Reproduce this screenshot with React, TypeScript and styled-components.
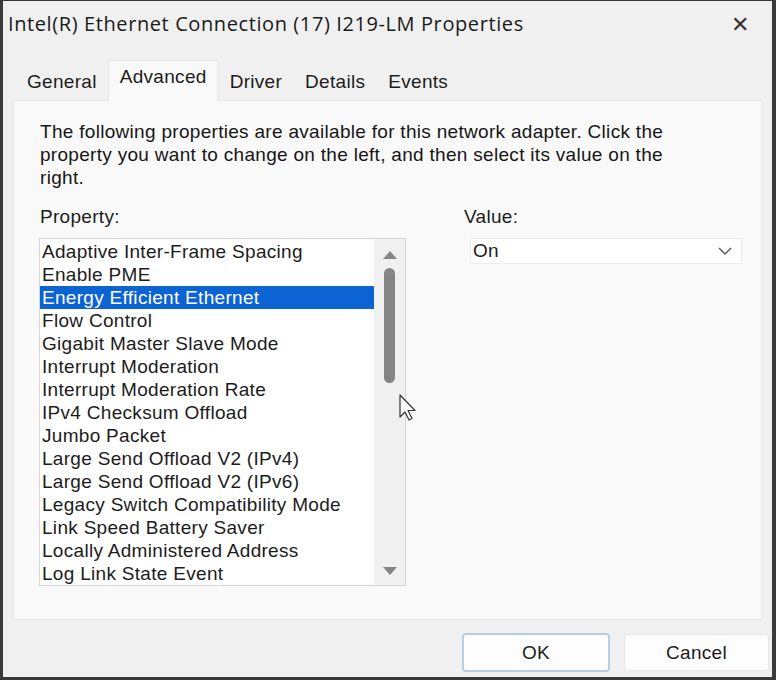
import styled, { createGlobalStyle } from 'styled-components';

const GlobalStyle = createGlobalStyle`
    html, body {
        margin: 0;
        padding: 0;
        background: #3a3a3a;
    }
    * {
        box-sizing: border-box;
    }
`;

const Window = styled.div`
    position: relative;
    width: 776px;
    height: 680px;
    display: flex;
    flex-direction: column;
    background: #f0f0f0;
    border-style: solid;
    border-color: #3a3a3a;
    border-width: 1px 4px 3px 3px;
    font-family: 'Liberation Sans', Arial, sans-serif;
    font-size: 19px;
    letter-spacing: 0.3px;
    color: #1c1c1c;
`;

const TitleBar = styled.div`
    height: 44px;
    display: flex;
    align-items: center;
    justify-content: space-between;
    padding: 0 22px 0 5px;
    font-family: 'Open Sans', sans-serif;
    font-size: 20px;
    letter-spacing: 0.6px;
    color: #1a1a1a;
`;

const Close = styled.span`
    font-size: 22px;
    font-weight: 300;
    color: #333;
`;

const Tabs = styled.div`
    display: flex;
    align-items: flex-end;
    height: 55px;
    padding-left: 12px;
`;

const Tab = styled.div<{ $active?: boolean }>`
    height: ${(p) => (p.$active ? '41px' : '35px')};
    padding: ${(p) => (p.$active ? '5px 10px 0 11px' : '4px 10px 0 11px')};
    margin-bottom: -1px;
    background: ${(p) => (p.$active ? '#f9f9f9' : 'transparent')};
    border: 1px solid ${(p) => (p.$active ? '#e6e6e6' : 'transparent')};
    border-bottom: none;
    position: relative;
    z-index: 1;
`;

const Panel = styled.div`
    margin: 0 10px 0 10px;
    height: 520px;
    background: #f9f9f9;
    border: 1px solid #e6e6e6;
    padding: 19px 26px 0 26px;
`;

const Intro = styled.p`
    margin: 0;
    line-height: 23px;
    width: 660px;
    color: #161616;
`;

const Columns = styled.div`
    display: grid;
    grid-template-columns: 367px 272px;
    column-gap: 57px;
    margin-top: 16px;
`;

const Label = styled.div`
    line-height: 23px;
    margin-bottom: 10px;
`;

const ListBox = styled.div`
    display: flex;
    width: 367px;
    height: 348px;
    margin-left: -1px;
    background: #fff;
    border: 1px solid #d6d6d6;
`;

const Items = styled.div`
    flex: 1;
    padding-top: 1px;
`;

const Item = styled.div<{ $selected?: boolean }>`
    height: 23px;
    line-height: 23px;
    padding-left: 2px;
    white-space: nowrap;
    background: ${(p) => (p.$selected ? '#0b63d4' : 'transparent')};
    color: ${(p) => (p.$selected ? '#fff' : '#1c1c1c')};
`;

const ScrollBar = styled.div`
    width: 31px;
    background: #f0f0f0;
    display: flex;
    flex-direction: column;
    align-items: center;
    padding: 12px 0 10px;
`;

const Arrow = styled.div<{ $down?: boolean }>`
    width: 0;
    height: 0;
    border-left: 7px solid transparent;
    border-right: 7px solid transparent;
    ${(p) => (p.$down ? 'border-top: 8px solid #858585;' : 'border-bottom: 8px solid #858585;')}
`;

const Thumb = styled.div`
    width: 11px;
    height: 115px;
    margin-top: 9px;
    border-radius: 6px;
    background: #858585;
`;

const Track = styled.div`
    flex: 1;
`;

const Select = styled.div`
    margin-left: 6px;
    margin-top: 2px;
    height: 26px;
    width: 272px;
    background: #fff;
    border: 1px solid #ececec;
    display: flex;
    align-items: center;
    justify-content: space-between;
    padding: 0 9px 0 2px;
`;

const Footer = styled.div`
    flex: 1;
    display: flex;
    justify-content: flex-end;
    align-items: center;
    gap: 14px;
    padding: 8px 3px 0 0;
`;

const Button = styled.button<{ $default?: boolean }>`
    width: ${(p) => (p.$default ? '148px' : '145px')};
    height: ${(p) => (p.$default ? '39px' : '37px')};
    background: #fdfdfd;
    border: ${(p) => (p.$default ? '2px solid #b7cde3' : '1px solid #e8e8e8')};
    border-radius: 4px;
    font-family: 'Liberation Sans', Arial, sans-serif;
    font-size: 19px;
    letter-spacing: 0.3px;
    color: #1c1c1c;
`;

const Cursor = styled.svg`
    position: absolute;
    left: 395px;
    top: 393px;
`;

const properties = [
    'Adaptive Inter-Frame Spacing',
    'Enable PME',
    'Energy Efficient Ethernet',
    'Flow Control',
    'Gigabit Master Slave Mode',
    'Interrupt Moderation',
    'Interrupt Moderation Rate',
    'IPv4 Checksum Offload',
    'Jumbo Packet',
    'Large Send Offload V2 (IPv4)',
    'Large Send Offload V2 (IPv6)',
    'Legacy Switch Compatibility Mode',
    'Link Speed Battery Saver',
    'Locally Administered Address',
    'Log Link State Event',
];

export default function App() {
    return (
        <>
            <GlobalStyle />
            <Window>
                <TitleBar>
                    <span>Intel(R) Ethernet Connection (17) I219-LM Properties</span>
                    <Close>✕</Close>
                </TitleBar>
                <Tabs>
                    <Tab>General</Tab>
                    <Tab $active>Advanced</Tab>
                    <Tab>Driver</Tab>
                    <Tab>Details</Tab>
                    <Tab>Events</Tab>
                </Tabs>
                <Panel>
                    <Intro>
                        The following properties are available for this network adapter. Click the
                        property you want to change on the left, and then select its value on the
                        right.
                    </Intro>
                    <Columns>
                        <div>
                            <Label>Property:</Label>
                            <ListBox>
                                <Items>
                                    {properties.map((p) => (
                                        <Item key={p} $selected={p === 'Energy Efficient Ethernet'}>
                                            {p}
                                        </Item>
                                    ))}
                                </Items>
                                <ScrollBar>
                                    <Arrow />
                                    <Thumb />
                                    <Track />
                                    <Arrow $down />
                                </ScrollBar>
                            </ListBox>
                        </div>
                        <div>
                            <Label>Value:</Label>
                            <Select>
                                <span>On</span>
                                <svg width="14" height="8" viewBox="0 0 14 8">
                                    <path d="M1 1l6 6 6-6" fill="none" stroke="#555" strokeWidth="1.4" />
                                </svg>
                            </Select>
                        </div>
                    </Columns>
                </Panel>
                <Footer>
                    <Button $default>OK</Button>
                    <Button>Cancel</Button>
                </Footer>
                <Cursor width="18" height="28" viewBox="0 0 18 28">
                    <path
                        d="M2 1v22l5-5 4 8 3-1.5-4-8h7z"
                        fill="#fff"
                        stroke="#333"
                        strokeWidth="1.2"
                        strokeLinejoin="round"
                    />
                </Cursor>
            </Window>
        </>
    );
}
